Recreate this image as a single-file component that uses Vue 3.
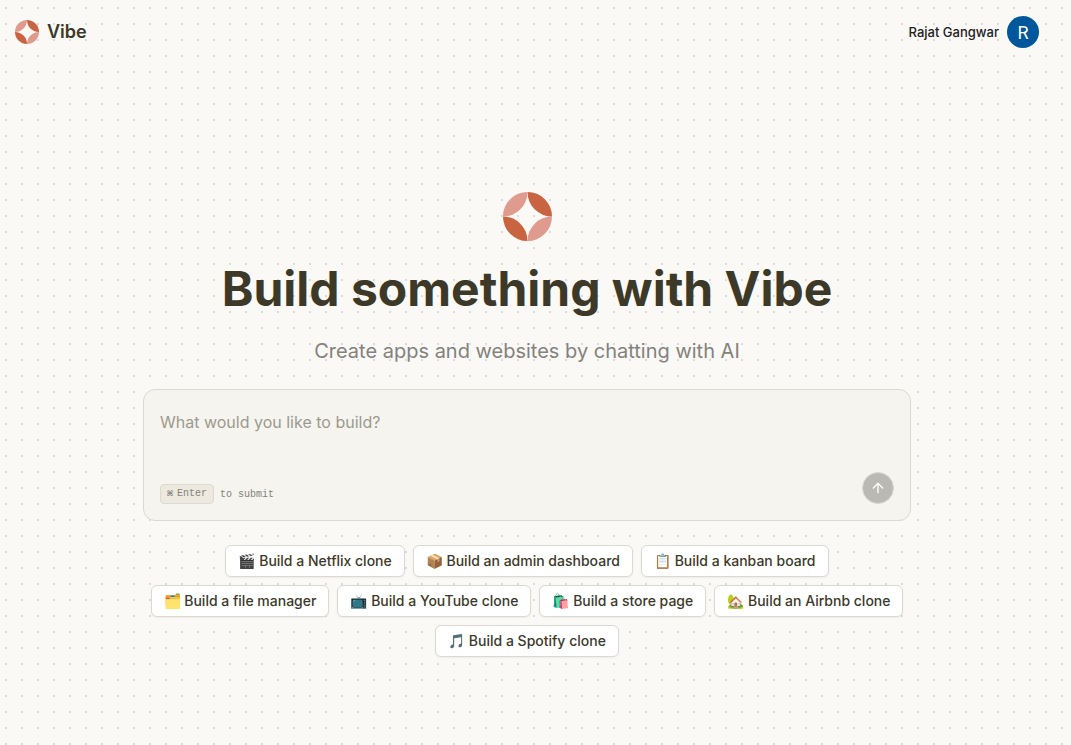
<script setup>
import { ref } from 'vue'

const prompt = ref('')

const templates = [
  { emoji: '🎬', title: 'Build a Netflix clone' },
  { emoji: '📦', title: 'Build an admin dashboard' },
  { emoji: '📋', title: 'Build a kanban board' },
  { emoji: '🗂️', title: 'Build a file manager' },
  { emoji: '📺', title: 'Build a YouTube clone' },
  { emoji: '🛍️', title: 'Build a store page' },
  { emoji: '🏡', title: 'Build an Airbnb clone' },
  { emoji: '🎵', title: 'Build a Spotify clone' },
]
</script>

<template>
  <div class="page">
    <header class="nav">
      <a class="brand" href="#">
        <svg class="brand-logo" viewBox="0 0 48 48" aria-hidden="true">
          <path d="M24 0A24 24 0 0 1 48 24A24 24 0 0 1 24 0Z" fill="#c96442" />
          <path d="M0 24A24 24 0 0 1 24 48A24 24 0 0 1 0 24Z" fill="#c96442" />
          <path d="M24 0A24 24 0 0 0 0 24A24 24 0 0 0 24 0Z" fill="#e09b8f" />
          <path d="M48 24A24 24 0 0 0 24 48A24 24 0 0 0 48 24Z" fill="#e09b8f" />
        </svg>
        <span>Vibe</span>
      </a>
      <button class="user" type="button">
        <span>Rajat Gangwar</span>
        <span class="avatar">R</span>
      </button>
    </header>

    <main class="hero">
      <svg class="hero-logo" viewBox="0 0 48 48" aria-hidden="true">
        <path d="M24 0A24 24 0 0 1 48 24A24 24 0 0 1 24 0Z" fill="#c96442" />
        <path d="M0 24A24 24 0 0 1 24 48A24 24 0 0 1 0 24Z" fill="#c96442" />
        <path d="M24 0A24 24 0 0 0 0 24A24 24 0 0 0 24 0Z" fill="#e09b8f" />
        <path d="M48 24A24 24 0 0 0 24 48A24 24 0 0 0 48 24Z" fill="#e09b8f" />
      </svg>
      <h1>Build something with Vibe</h1>
      <p class="subtitle">Create apps and websites by chatting with AI</p>

      <form class="composer" @submit.prevent>
        <textarea
          v-model="prompt"
          rows="2"
          aria-label="Prompt"
          placeholder="What would you like to build?"
        ></textarea>
        <div class="composer-bar">
          <div class="hint">
            <kbd><span class="cmd">⌘</span>Enter</kbd>
            <span>to submit</span>
          </div>
          <button class="send" type="submit" aria-label="Submit" :disabled="!prompt">
            <svg viewBox="0 0 24 24" aria-hidden="true">
              <path d="m5 12 7-7 7 7M12 19V5" />
            </svg>
          </button>
        </div>
      </form>

      <div class="templates">
        <button
          v-for="item in templates"
          :key="item.title"
          class="template"
          type="button"
          @click="prompt = item.title"
        >{{ item.emoji }} {{ item.title }}</button>
      </div>
    </main>
  </div>
</template>

<style>
body {
  background: #faf9f5;
}
</style>

<style scoped>
.page {
  box-sizing: border-box;
  min-height: 100vh;
  padding-right: 17px;
  font-family: Inter, "Liberation Sans", sans-serif;
  color: #3d3929;
  background-color: #faf9f5;
  background-image: conic-gradient(from 90deg at 14px 14px, #dcdbe3 25%, transparent 0);
  background-size: 16px 16px;
  background-position: 7px 9px;
}

button {
  font: inherit;
  color: inherit;
}

.nav {
  display: flex;
  align-items: center;
  justify-content: space-between;
  padding: 16px 15px;
}

.brand {
  display: flex;
  align-items: center;
  gap: 8px;
  font-size: 18px;
  font-weight: 600;
  line-height: 28px;
  color: inherit;
  text-decoration: none;
}

.brand-logo {
  width: 24px;
  height: 24px;
}

.user {
  display: flex;
  align-items: center;
  gap: 8px;
  padding: 0;
  border: 0;
  background: none;
  font-size: 13px;
  font-weight: 500;
  color: #212126;
}

.avatar {
  display: grid;
  place-items: center;
  width: 32px;
  height: 32px;
  border-radius: 50%;
  background: #01579b;
  color: #fff;
  font-family: Roboto, sans-serif;
  font-size: 18px;
  font-weight: 400;
}

.hero {
  display: flex;
  flex-direction: column;
  align-items: center;
  max-width: 768px;
  margin: 0 auto;
  padding: 128px 16px 88px;
}

.hero-logo {
  width: 49px;
  height: 49px;
}

h1 {
  margin: 24px 0 0;
  font-size: 48px;
  font-weight: 700;
  line-height: 48px;
  text-align: center;
}

.subtitle {
  margin: 24px 0 0;
  font-size: 20px;
  line-height: 28px;
  text-align: center;
  color: #83827d;
}

.composer {
  box-sizing: border-box;
  width: 100%;
  margin-top: 24px;
  padding: 20px 16px 16px;
  border: 1px solid #dad9d4;
  border-radius: 12px;
  background: #f5f4ef;
}

textarea {
  display: block;
  box-sizing: border-box;
  width: 100%;
  height: 62px;
  padding: 0;
  border: 0;
  outline: 0;
  resize: none;
  background: transparent;
  font: 16px/24px Inter, "Liberation Sans", sans-serif;
  color: #3d3929;
}

textarea::placeholder {
  color: #9c9a8e;
  opacity: 1;
}

.composer-bar {
  display: flex;
  align-items: flex-end;
  justify-content: space-between;
}

.hint {
  display: flex;
  align-items: center;
  gap: 6px;
  font-family: "Liberation Mono", monospace;
  font-size: 10px;
  line-height: 15px;
  color: #83827d;
}

kbd {
  display: flex;
  align-items: center;
  gap: 4px;
  box-sizing: border-box;
  height: 20px;
  padding: 0 6px 2px;
  border: 1px solid #dad9d4;
  border-radius: 4px;
  background: #ede9de;
  font: inherit;
}

.cmd {
  font-family: "DejaVu Sans Mono", monospace;
  font-weight: 700;
}

.send {
  display: grid;
  place-items: center;
  width: 32px;
  height: 32px;
  padding: 0;
  border: 1px solid #dad9d4;
  border-radius: 50%;
  background: #bab9b3;
  color: #fff;
}

.send svg {
  width: 16px;
  height: 16px;
  fill: none;
  stroke: currentColor;
  stroke-width: 2;
  stroke-linecap: round;
  stroke-linejoin: round;
}

.templates {
  display: flex;
  flex-wrap: wrap;
  justify-content: center;
  gap: 8px;
  margin-top: 24px;
}

.template {
  height: 32px;
  padding: 0 12px;
  border: 1px solid #dad9d4;
  border-radius: 6px;
  background: #fff;
  box-shadow: 0 1px 2px rgb(0 0 0 / 5%);
  font-size: 14px;
  font-weight: 500;
  line-height: 20px;
  white-space: nowrap;
}
</style>
